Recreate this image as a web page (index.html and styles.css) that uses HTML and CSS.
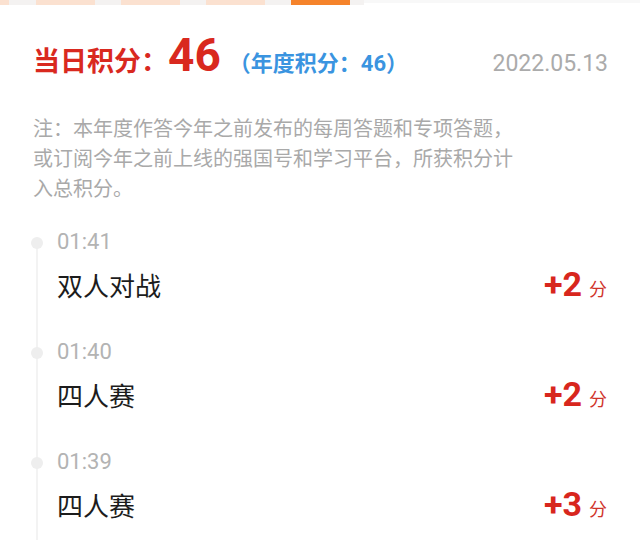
FILE: index.html
```html
<!DOCTYPE html>
<html lang="zh-CN">
<head>
<meta charset="utf-8">
<title>积分明细</title>
<link rel="stylesheet" href="styles.css">
</head>
<body>
<div class="progress">
  <span class="seg peach s1"></span>
  <span class="seg grey g1"></span>
  <span class="seg peach s2"></span>
  <span class="seg grey g2"></span>
  <span class="seg peach s2"></span>
  <span class="seg grey g2"></span>
  <span class="seg peach s2"></span>
  <span class="seg grey g2"></span>
  <span class="seg orange s2"></span>
  <span class="seg grey g3"></span>
  <span class="seg rest"></span>
</div>

<header class="summary">
  <span class="day-label">当日积分：</span>
  <span class="day-score">46</span>
  <span class="year-score">（年度积分：46）</span>
  <span class="date">2022.05.13</span>
</header>

<p class="note">注：本年度作答今年之前发布的每周答题和专项答题，或订阅今年之前上线的强国号和学习平台，所获积分计入总积分。</p>

<ul class="timeline">
  <li class="item">
    <div class="time">01:41</div>
    <div class="row">
      <span class="title">双人对战</span>
      <span class="points"><b>+2</b><span class="unit">分</span></span>
    </div>
  </li>
  <li class="item">
    <div class="time">01:40</div>
    <div class="row">
      <span class="title">四人赛</span>
      <span class="points"><b>+2</b><span class="unit">分</span></span>
    </div>
  </li>
  <li class="item">
    <div class="time">01:39</div>
    <div class="row">
      <span class="title">四人赛</span>
      <span class="points"><b>+3</b><span class="unit">分</span></span>
    </div>
  </li>
</ul>
</body>
</html>
```

FILE: styles.css
```css
* { box-sizing: border-box; }

html, body {
  margin: 0;
  padding: 0;
  background: #ffffff;
  font-family: Roboto, "Noto Sans CJK SC", "Noto Sans", sans-serif;
  width: 640px;
  height: 540px;
  overflow: hidden;
}

.progress {
  display: flex;
  height: 5px;
}
.seg { display: block; height: 5px; flex: none; }
.peach { background: #fbe1d0; }
.grey { background: #f4f2f1; }
.orange { background: #f5832b; }
.rest { flex: 1; background: #f8f8f8; height: 3px; }
.s1 { width: 9px; }
.g1 { width: 27px; }
.s2 { width: 59px; }
.g2 { width: 26px; }
.g3 { width: 14px; }

.summary {
  display: flex;
  align-items: baseline;
  padding: 28px 32px 0 33px;
  height: 80px;
}
.day-label {
  font-size: 27px;
  font-weight: 700;
  color: #d9291f;
  line-height: 44px;
}
.day-score {
  font-size: 46px;
  font-weight: 700;
  color: #d9291f;
  line-height: 44px;
}
.year-score {
  font-size: 22px;
  font-weight: 700;
  color: #3a94e0;
  margin-left: 8px;
}
.date {
  margin-left: auto;
  font-size: 23px;
  color: #ababab;
}

.note {
  margin: 29px 0 0 33px;
  width: 492px;
  font-size: 20px;
  line-height: 30px;
  color: #a9a9a9;
}

.timeline {
  list-style: none;
  margin: 23px 0 0 0;
  padding: 0;
  position: relative;
}
.timeline::before {
  content: "";
  position: absolute;
  left: 36px;
  top: 16px;
  bottom: -200px;
  width: 2px;
  background: #f3f3f3;
}
.item {
  position: relative;
  height: 110px;
  padding: 0 33px 0 57px;
}
.item::before {
  content: "";
  position: absolute;
  left: 31px;
  top: 10px;
  width: 12px;
  height: 12px;
  border-radius: 50%;
  background: #eeeeee;
}
.time {
  font-size: 22px;
  line-height: 30px;
  color: #b3b3b3;
}
.row {
  display: flex;
  justify-content: space-between;
  align-items: baseline;
  margin-top: 9px;
  line-height: 36px;
}
.title {
  font-size: 26px;
  color: #1c1c1c;
}
.points b {
  font-size: 34px;
  font-weight: 700;
  color: #d8261d;
}
.unit {
  font-size: 18px;
  color: #d0332b;
  margin-left: 7px;
}
```
